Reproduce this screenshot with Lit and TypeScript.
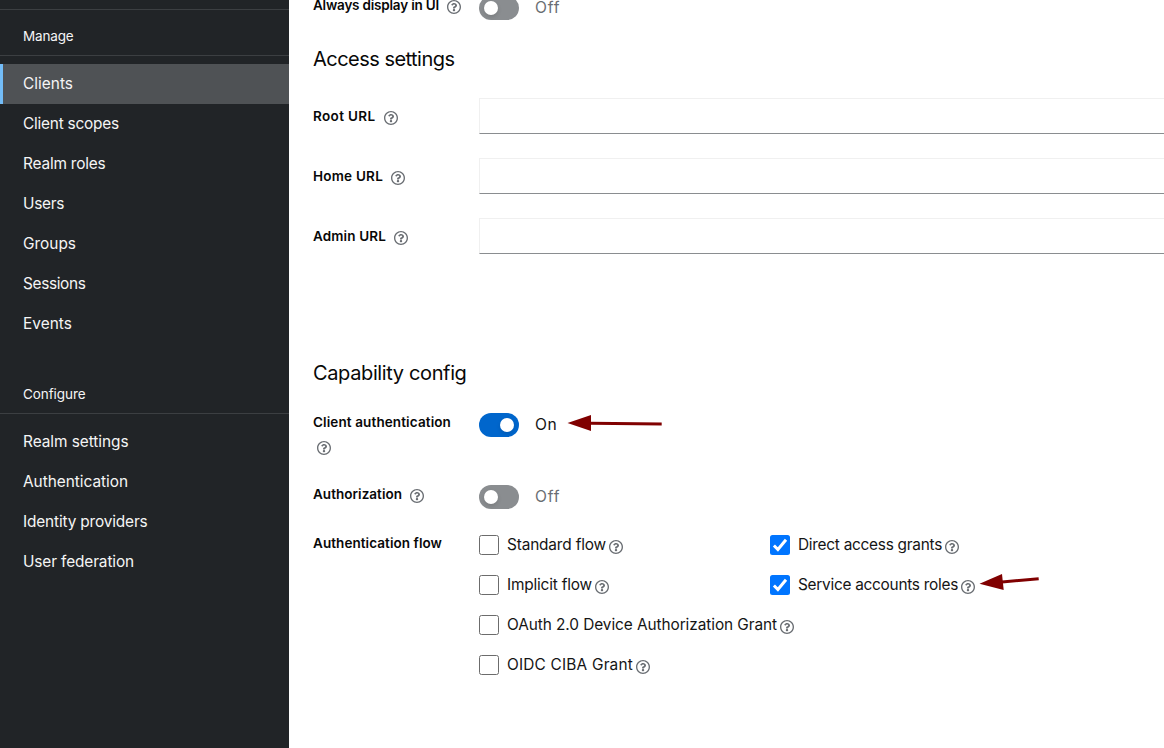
import { LitElement, html, css, svg, nothing } from "lit";
import { customElement, property } from "lit/decorators.js";

/** One line of text whose tracking is adjusted to fill a given measure. */
@customElement("fit-text")
class FitText extends LitElement {
  static styles = css`
    :host { display: inline-block; white-space: nowrap; flex: none; }
  `;
  @property() text = "";
  @property({ type: Number }) measure = 0;

  render() {
    return html`<span>${this.text}</span>`;
  }

  updated() {
    const span = this.renderRoot.querySelector("span") as HTMLElement;
    span.style.letterSpacing = "0px";
    const natural = span.getBoundingClientRect().width;
    span.style.letterSpacing = `${(this.measure - natural) / this.text.length}px`;
    this.style.width = `${this.measure}px`;
  }
}

@customElement("help-icon")
class HelpIcon extends LitElement {
  static styles = css`
    :host { display: block; width: 14px; height: 14px; flex: none; color: #6a6e73; }
    svg { display: block; width: 14px; height: 14px; fill: currentColor; }
  `;
  render() {
    return html`<svg viewBox="8 8 496 496"><path d="M256 8C119.043 8 8 119.083 8 256c0 136.997 111.043 248 248 248s248-111.003 248-248C504 119.083 392.957 8 256 8zm0 448c-110.532 0-200-89.431-200-200 0-110.495 89.472-200 200-200 110.491 0 200 89.471 200 200 0 110.53-89.431 200-200 200zm107.244-255.2c0 67.052-72.421 68.084-72.421 92.863V300c0 6.627-5.373 12-12 12h-45.647c-6.627 0-12-5.373-12-12v-8.659c0-35.745 27.1-50.034 47.579-61.516 17.561-9.845 28.324-16.541 28.324-29.579 0-17.246-21.999-28.693-39.784-28.693-23.189 0-33.894 10.977-48.942 29.969-4.057 5.12-11.46 6.071-16.666 2.124l-27.824-21.098c-5.107-3.872-6.251-11.066-2.644-16.363C184.846 131.491 214.94 112 261.794 112c49.071 0 101.45 38.304 101.45 88.8zM298 368c0 23.159-18.841 42-42 42s-42-18.841-42-42 18.841-42 42-42 42 18.841 42 42z"/></svg>`;
  }
}

@customElement("toggle-switch")
class ToggleSwitch extends LitElement {
  static styles = css`
    :host { display: flex; align-items: center; gap: 16px; height: 24px; font-size: 15.6px; font-weight: 370; color: #6a6e73; }
    :host([on]) { color: #151515; }
    .track { box-sizing: border-box; width: 40px; height: 24px; padding: 0 5px; border-radius: 12px; background: #8a8d90; display: flex; align-items: center; }
    :host([on]) .track { background: #06c; justify-content: flex-end; }
    .knob { width: 14.4px; height: 14.4px; border-radius: 50%; background: #fff; box-shadow: 0 2px 4px rgba(3, 3, 3, 0.12); }
    fit-text { line-height: 18px; margin-bottom: 1px; }
  `;
  @property({ type: Boolean, reflect: true }) on = false;
  render() {
    return html`<span class="track"><span class="knob"></span></span>
      <fit-text .text=${this.on ? "On" : "Off"} .measure=${this.on ? 22.5 : 25.5}></fit-text>`;
  }
}

@customElement("check-option")
class CheckOption extends LitElement {
  static styles = css`
    :host { display: flex; height: 20px; align-items: center; font-size: 15.4px; font-weight: 370; color: #151515; }
    .box { box-sizing: border-box; width: 20px; height: 20px; border: 1px solid #6c6c6c; border-radius: 2.5px; margin-right: 8px; flex: none; background: #fff; }
    .box.checked { border: 0; background: #0075ff; }
    .box svg { display: block; width: 20px; height: 20px; }
    fit-text { margin-bottom: 2px; }
    help-icon { margin: 4px 0 0 3px; }
  `;
  @property() label = "";
  @property({ type: Number }) measure = 0;
  @property({ type: Boolean }) checked = false;
  render() {
    return html`<span class="box ${this.checked ? "checked" : ""}">${this.checked
        ? html`<svg viewBox="0 0 20 20"><path d="M3.9 10.5l4 4L16 4.7" fill="none" stroke="#fff" stroke-width="3"/></svg>`
        : nothing}</span>
      <fit-text .text=${this.label} .measure=${this.measure}></fit-text><help-icon></help-icon>`;
  }
}

type Entry = [string, number];

const MANAGE: Entry[] = [
  ["Clients", 50], ["Client scopes", 96], ["Realm roles", 82.5], ["Users", 41],
  ["Groups", 53], ["Sessions", 62.5], ["Events", 49],
];
const CONFIGURE: Entry[] = [
  ["Realm settings", 105.5], ["Authentication", 105], ["Identity providers", 124.5], ["User federation", 111],
];
const URLS: Entry[] = [["Root URL", 62.5], ["Home URL", 70], ["Admin URL", 73]];

@customElement("app-root")
class AppRoot extends LitElement {
  static styles = css`
    :host { display: flex; position: relative; width: 1164px; height: 748px; overflow: hidden; background: #fff; color: #080808; font-family: Inter, "Liberation Sans", sans-serif; }
    .sidebar { width: 289px; height: 748px; flex: none; background: #212427; color: #f5f5f5; font-weight: 370; }
    .rule { height: 9px; border-bottom: 1px solid #3c3f42; }
    .group { box-sizing: border-box; height: 46px; padding: 16px 23px 0; border-bottom: 1px solid #3c3f42; font-size: 13.5px; line-height: 20px; }
    .items { padding-top: 8px; }
    .item { box-sizing: border-box; height: 40px; padding-left: 23px; display: flex; align-items: center; font-size: 15.4px; line-height: 24px; }
    .item.active { background: #4f5255; border-left: 3px solid #73bcf7; padding-left: 20px; }
    .second { margin-top: 24px; }
    .main { flex: 1; min-width: 0; padding-left: 24px; }
    .row { display: grid; grid-template-columns: 166px 1fr; align-items: start; }
    .label { display: flex; flex-wrap: wrap; font-size: 13.5px; font-weight: 570; line-height: 20px; }
    .label fit-text { margin-top: -1px; }
    .label help-icon { margin: 4px 0 0 8px; }
    h2 { margin: 0; font-size: 20px; line-height: 26px; font-weight: 420; }
    .display { height: 20px; }
    .display toggle-switch { margin-top: -4px; }
    .display .label { line-height: 14px; }
    .display .label fit-text { margin-top: -2px; }
    .display .label help-icon { margin-top: -0.5px; }
    .access { padding-top: 26px; }
    .urls { padding-top: 26px; display: grid; gap: 24px; }
    .urls .label { padding-top: 9px; }
    .field { box-sizing: border-box; height: 36px; border: 1px solid #f0f0f0; border-right: 0; border-bottom-color: #8a8d90; }
    .capability { padding-top: 106px; }
    .auth { padding-top: 27px; height: 72px; }
    .auth .label help-icon { margin: 9px 30px 0 4px; }
    .authz { height: 50px; }
    .flow .label { margin-top: -1px; }
    .options { display: grid; grid-template-columns: 291px 1fr; row-gap: 20px; }
    .arrows { position: absolute; inset: 0; width: 1164px; height: 748px; pointer-events: none; }
  `;

  private nav(entries: Entry[], active = "") {
    return html`<div class="items">${entries.map(
      ([name, w]) => html`<div class="item ${name === active ? "active" : ""}"><fit-text .text=${name} .measure=${w}></fit-text></div>`
    )}</div>`;
  }

  private label(text: string, measure: number, help = true) {
    return html`<div class="label"><fit-text .text=${text} .measure=${measure}></fit-text>${help ? html`<help-icon></help-icon>` : nothing}</div>`;
  }

  private arrow(head: string, line: string) {
    return svg`<polygon points=${head} fill="#800000"/><path d=${line} stroke="#800000" stroke-width="3" fill="none"/>`;
  }

  render() {
    return html`
      <nav class="sidebar">
        <div class="rule"></div>
        <div class="group"><fit-text .text=${"Manage"} .measure=${50.5}></fit-text></div>
        ${this.nav(MANAGE, "Clients")}
        <div class="group second"><fit-text .text=${"Configure"} .measure=${62.5}></fit-text></div>
        ${this.nav(CONFIGURE)}
      </nav>
      <main class="main">
        <div class="row display">${this.label("Always display in UI", 126)}<toggle-switch></toggle-switch></div>
        <section class="access">
          <h2><fit-text .text=${"Access settings"} .measure=${141.5}></fit-text></h2>
          <div class="urls">${URLS.map(([name, w]) => html`<div class="row">${this.label(name, w)}<div class="field"></div></div>`)}</div>
        </section>
        <section class="capability">
          <h2><fit-text .text=${"Capability config"} .measure=${153.5}></fit-text></h2>
          <div class="row auth">${this.label("Client authentication", 138)}<toggle-switch on></toggle-switch></div>
          <div class="row authz">${this.label("Authorization", 89)}<toggle-switch></toggle-switch></div>
          <div class="row flow">
            ${this.label("Authentication flow", 129, false)}
            <div class="options">
              <check-option .label=${"Standard flow"} .measure=${99}></check-option>
              <check-option .label=${"Direct access grants"} .measure=${144} .checked=${true}></check-option>
              <check-option .label=${"Implicit flow"} .measure=${85}></check-option>
              <check-option .label=${"Service accounts roles"} .measure=${160} .checked=${true}></check-option>
              <check-option .label=${"OAuth 2.0 Device Authorization Grant"} .measure=${270}></check-option>
              <span></span>
              <check-option .label=${"OIDC CIBA Grant"} .measure=${126}></check-option>
            </div>
          </div>
        </section>
      </main>
      <svg class="arrows" viewBox="0 0 1164 748">
        ${this.arrow("567.5,423 591,415 591,431", "M590 423.2L661.7 424")}
        ${this.arrow("979.5,583.7 1002,574 1003.7,590", "M1002 582L1038.7 578.7")}
      </svg>`;
  }
}
